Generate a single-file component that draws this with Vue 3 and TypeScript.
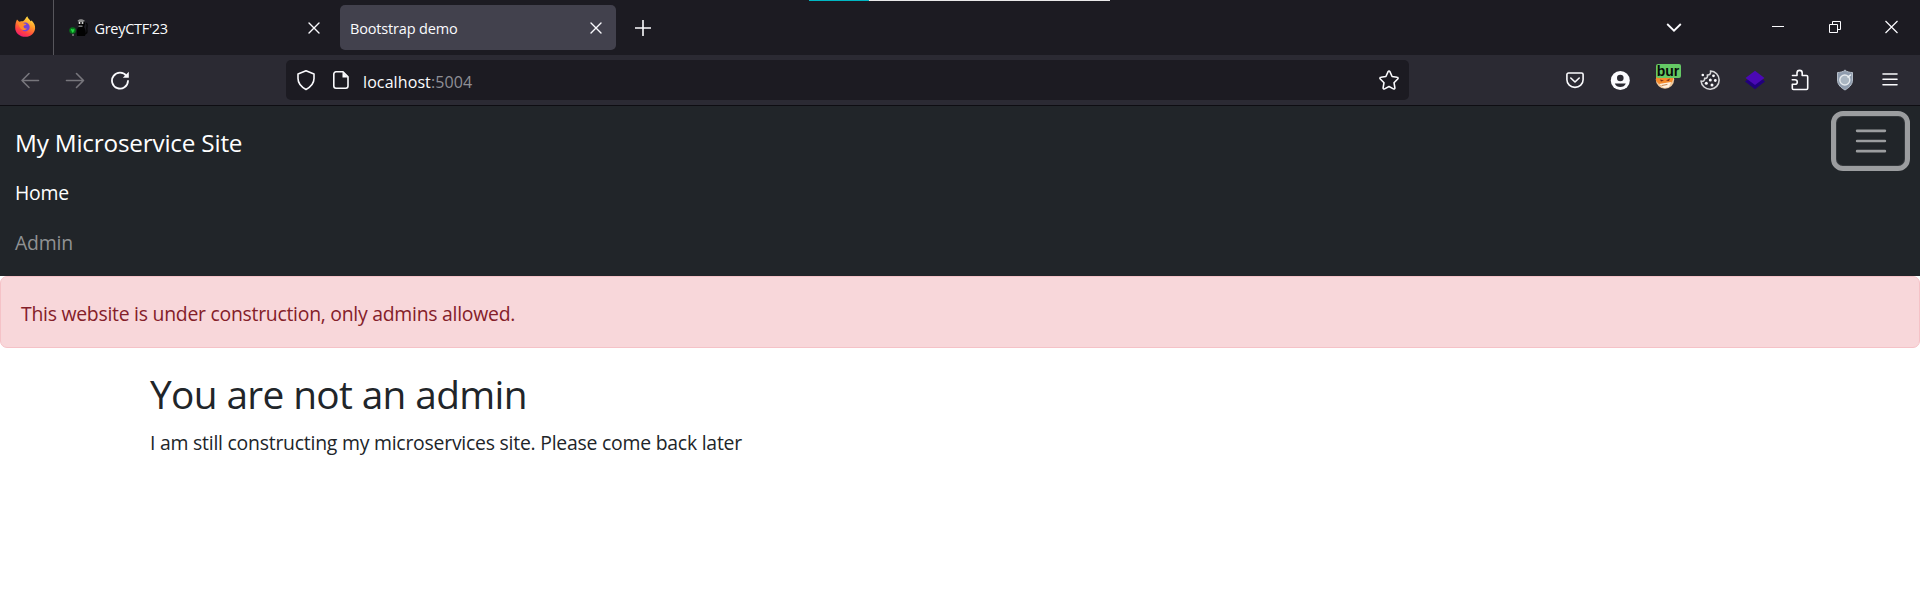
<script setup lang="ts">
interface NavLink {
  label: string
  active: boolean
}

const links: NavLink[] = [
  { label: 'Home', active: true },
  { label: 'Admin', active: false },
]
</script>

<template>
  <div class="window">
    <header class="tabs">
      <div class="load-strip"></div>
      <div class="view-button">
        <svg width="22" height="22" viewBox="0 0 22 22">
          <defs>
            <linearGradient id="flame" x1="0.8" y1="0" x2="0.3" y2="1">
              <stop offset="0" stop-color="#fff04a" />
              <stop offset="0.4" stop-color="#ff9a2a" />
              <stop offset="0.75" stop-color="#ff4340" />
              <stop offset="1" stop-color="#ee1a72" />
            </linearGradient>
          </defs>
          <path fill="url(#flame)" d="M3 3.500 5.200 5.800C6.500 5.200 8 5.400 9 5.300 11 4.400 11.500 2 13.300.3c.4 2 2.200 2.800 3.300 4.900l1.100-.7c2.500 2.600 3.600 5 3.400 8-.4 4.800-4.500 8.300-9.600 8.300C5.500 20.800 1.200 16.900 1.200 11.700c0-3.500.7-6 1.800-8.200z" />
          <circle cx="11.300" cy="11" r="4.400" fill="#7443d8" />
          <path fill="#ff8a2a" d="M3.500 7C5.500 5.600 8.500 6 10 7.600l2.500.5c-.4 1.300-2.500 1-3 2.200.2 1.500 1.600 2.700 3.500 2.200-1.500 2.200-4.800 2-6.200.2C5.600 11.500 5 9 3.500 7z" />
        </svg>
      </div>
      <div class="tab">
        <svg class="favicon" width="20" height="20" viewBox="0 0 20 20">
          <path d="M16 16c4-1 1-4 2-7 0-2 1-3-1-4" fill="none" stroke="#050505" stroke-width="1.200" />
          <path d="M9 7c0-3 1-5 3-5s4 1 4 4l-1 3c2 3 2 6 1 9H8c0-3-1-7 2-9z" fill="#020202" />
          <path d="M8.500 3c1-2.500 5.500-2.500 7.500 0L14 4h-4z" fill="#8d8d8d" />
          <circle cx="10.500" cy="5" r="1" fill="#fff" /><circle cx="13.500" cy="5" r="1" fill="#ddd" />
          <path d="M9.500 8.200h4" stroke="#777" />
          <circle cx="3.600" cy="12.500" r="3.300" fill="#08731c" />
          <path d="M2 11.500l2 1 1.200-1M3 14l1.500-1" stroke="#25d943" fill="none" />
          <path d="M4 16v2" stroke="#888" stroke-width="1.400" />
        </svg>
        <span class="tab-label grey-label">GreyCTF'23</span>
        <svg class="close" width="12" height="12" viewBox="0 0 12 12"><path d="M1 1l10 10M11 1L1 11" /></svg>
      </div>
      <div class="tab selected">
        <span class="tab-label demo-label">Bootstrap demo</span>
        <svg class="close" width="12" height="12" viewBox="0 0 12 12"><path d="M1 1l10 10M11 1L1 11" /></svg>
      </div>
      <svg class="plus" width="16" height="16" viewBox="0 0 16 16"><path d="M8 .5v15M.5 8h15" /></svg>
      <div class="caption">
        <svg class="chevron" width="16" height="10" viewBox="0 0 16 10"><path d="M1.200 1 8 7.700l6.800-6.700" /></svg>
        <svg width="57" height="20" viewBox="0 0 57 20"><path d="M23 8.500h12" /></svg>
        <svg width="57" height="20" viewBox="0 0 57 20"><path d="M23.500 6.500h8v8h-8zM26.500 6.500v-3h8v8h-3" /></svg>
        <svg width="57" height="20" viewBox="0 0 57 20"><path stroke-width="1.200" d="M22.500 3l12 12M34.500 3l-12 12" /></svg>
      </div>
    </header>

    <div class="toolbar">
      <div class="buttons">
        <span class="slot"><svg class="dim" width="20" height="20" viewBox="0 0 20 20"><path d="M18.500 10.500H2M9 3.500l-7 7 7 7" /></svg></span>
        <span class="slot"><svg class="dim" width="20" height="20" viewBox="0 0 20 20"><path d="M1.500 10.500h17M11.500 3.500l7 7-7 7" /></svg></span>
        <span class="slot"><svg width="20" height="20" viewBox="0 0 20 20"><path stroke-width="1.800" d="M16.500 6A8 8 0 1 0 18 11" /><path class="solid" d="M18.800 1.800v6h-6z" /></svg></span>
      </div>
      <div class="address">
        <svg class="shield" width="20" height="22" viewBox="0 0 20 22"><path d="M10 1.800 18 5v4.500c0 5-3.500 8.500-8 11-4.500-2.500-8-6-8-11V5z" /></svg>
        <svg class="page-icon" width="18" height="20" viewBox="0 0 18 20"><path d="M4 1.800h7l5 5V16a2.200 2.200 0 0 1-2.200 2.200H4A2.200 2.200 0 0 1 1.800 16V4A2.200 2.200 0 0 1 4 1.800z" /><path class="solid" d="M10.500 2v5.500H16z" /></svg>
        <span class="url"><b>localhost</b>:5004</span>
        <svg class="star" width="22" height="22" viewBox="0 0 22 22"><path d="M11 2c.5 0 .7.300.9.700l2.200 4.800 5 .7c1 .1 1.300 1.100.6 1.800L16 13.700l.9 5.100c.1 1-.7 1.500-1.500 1.100L11 17.500l-4.400 2.400c-.8.400-1.600-.1-1.500-1.100l.9-5.100L2.300 10c-.7-.7-.4-1.700.6-1.800l5-.7 2.200-4.800c.2-.4.4-.7.900-.7z" /></svg>
      </div>
      <div class="buttons extensions">
        <span class="slot"><svg width="20" height="20" viewBox="0 0 20 20"><path d="M3.500 3h13a1.600 1.600 0 0 1 1.600 1.600v5.200a8.100 7.600 0 0 1-16.200 0V4.600A1.600 1.600 0 0 1 3.500 3zM5.800 8l4.200 4 4.200-4" /></svg></span>
        <span class="slot"><svg width="20" height="20" viewBox="0 0 20 20"><circle class="solid" cx="10.300" cy="10.500" r="9.500" /><circle class="hole" cx="10.300" cy="8" r="3.300" /><path class="hole" d="M4.800 13.500h11c-1.500 4.700-9.500 4.700-11 0z" /></svg></span>
        <span class="slot badge-slot">
          <svg width="20" height="20" viewBox="0 0 20 20">
            <circle cx="10" cy="9.500" r="9.200" fill="#efc99e" stroke="none" />
            <path fill="#f58a2c" stroke="none" d="M1 7h18l-2 5-4 2-3-1-4 3-5-5z" />
            <path fill="#7c2c14" stroke="none" d="M5 9.500l4 1-3 .9zM15 8.500l-4 2 3 .5z" />
            <path fill="#fff0df" stroke="none" d="M4 14l6-1 6-1-2 5-5 1z" />
            <path d="M7 15.500l5-1" stroke="#c9854a" stroke-width="1" />
          </svg>
          <span class="badge">bur</span>
        </span>
        <span class="slot">
          <svg class="cookie" width="22" height="22" viewBox="0 0 22 22">
            <path d="M11.500 2A9.100 9.100 0 1 1 2 12c2 .8 4-.4 3.600-2.600C8 9.600 9 8 8.300 6c2.500.3 3.900-1.800 3.200-4z" />
            <g class="solid"><circle cx="3.800" cy="6" r="1.300" /><circle cx="14.500" cy="6.800" r="1.400" /><circle cx="11.300" cy="11" r="1.500" /><circle cx="16.300" cy="11.500" r="1.400" /><circle cx="7.300" cy="14.300" r="1.500" /><circle cx="13" cy="16" r="1.500" /></g>
          </svg>
        </span>
        <span class="slot"><svg width="20" height="20" viewBox="0 0 20 20"><path fill="#21007c" stroke="none" d="M0 11.500 3 9h14l3 2.500-10 7.800z" /><path fill="#4b08b5" stroke="none" d="M10 .8 19.500 8 10 15 .5 8z" /></svg></span>
        <span class="slot"><svg width="20" height="22" viewBox="0 0 20 22"><path d="M2.500 6.500H7V4a2.600 2.600 0 0 1 5.200 0v2.500h4.300a1.200 1.200 0 0 1 1.200 1.200v11.600a1.200 1.200 0 0 1-1.200 1.200h-13a1.200 1.200 0 0 1-1.200-1.200v-4H5a2.300 2.300 0 0 0 0-4.600H2.300" /></svg></span>
        <span class="slot"><svg width="18" height="22" viewBox="0 0 18 22"><path fill="#8f9cae" stroke="#b5bec9" stroke-width="1" d="M9 1.500c2.500 1.500 5 2 7.500 2V11c0 5-4 8-7.500 10-3.500-2-7.500-5-7.500-10V3.500C4 3.500 6.500 3 9 1.500z" /><circle cx="8.800" cy="11" r="5" fill="#aab6c2" stroke="#e4e9ed" stroke-width="1.400" /><path d="M12 8l2.500-2" stroke="#edf2f5" /></svg></span>
        <span class="slot"><svg width="16" height="14" viewBox="0 0 16 14"><path d="M1 1h14M1 6.300h14M1 11.700h14" /></svg></span>
      </div>
    </div>

    <nav class="navbar">
      <div class="menu">
        <a class="brand">My Microservice Site</a>
        <a v-for="link in links" :key="link.label" class="link" :class="{ active: link.active }">{{ link.label }}</a>
      </div>
      <button class="toggler" aria-label="Toggle navigation">
        <svg width="38" height="38" viewBox="0 0 30 30"><path d="M4 7h22M4 15h22M4 23h22" /></svg>
      </button>
    </nav>

    <div class="alert"><span>This website is under construction, only admins allowed.</span></div>
    <main class="content">
      <h2>You are not an admin</h2>
      <p>I am still constructing my microservices site. Please come back later</p>
    </main>
  </div>
</template>

<style>
body {
  margin: 0;
  background: #fff;
}
</style>

<style scoped>
.window {
  width: 1920px;
  height: 609px;
  overflow: hidden;
  font-family: "Open Sans", "Noto Sans", sans-serif;
  color: #212529;
}
svg {
  display: block;
  flex: none;
  fill: none;
  stroke: #fbfbfe;
  stroke-width: 1.6;
  stroke-linecap: round;
  stroke-linejoin: round;
}
.solid { fill: #fbfbfe; stroke: none; }
.hole { fill: #2b2a33; stroke: none; }

.tabs {
  position: relative;
  display: flex;
  align-items: center;
  height: 55px;
  background: #1c1b22;
  box-sizing: border-box;
}
.load-strip {
  position: absolute;
  top: 0;
  left: 809px;
  width: 301px;
  height: 1px;
  background: linear-gradient(90deg, #00b7c3 60px, #e9e9e9 60px);
}
.view-button {
  display: flex;
  align-items: center;
  width: 54px;
  height: 55px;
  padding-left: 14px;
  border-right: 1px solid #57565c;
  box-sizing: border-box;
}
.view-button svg {
  margin-bottom: 1px;
  stroke: none;
}
.tab {
  display: flex;
  align-items: center;
  width: 286px;
  height: 45px;
  padding: 0 20px 0 15px;
  box-sizing: border-box;
}
.favicon { margin-right: 5.5px; }
.favicon * { stroke-linecap: butt; }
.favicon circle { stroke: none; }
.favicon path[fill]:not([stroke]) { stroke: none; }
.tab-label {
  font-size: 14.5px;
  line-height: 20px;
  color: #fbfbfe;
  white-space: nowrap;
  margin-top: 3px;
}
.grey-label { letter-spacing: -0.3px; }
.demo-label { letter-spacing: -0.17px; }
.close {
  margin-left: auto;
  stroke-width: 1.4;
}
.selected {
  width: 276px;
  padding: 0 14px 0 10px;
  border-radius: 5px;
  background: #42414d;
}
.plus { margin-left: 19px; }
.caption {
  display: flex;
  align-items: center;
  margin-left: auto;
}
.caption svg {
  stroke-width: 1;
  stroke-linecap: butt;
  stroke-linejoin: miter;
}
.caption .chevron {
  margin-right: 67px;
  stroke-width: 1.8;
}

.toolbar {
  display: flex;
  align-items: center;
  height: 51px;
  padding-left: 7px;
  background: #2b2a33;
  border-bottom: 1px solid #0e0d12;
  box-sizing: border-box;
}
.buttons { display: flex; }
.slot {
  display: flex;
  align-items: center;
  justify-content: center;
  width: 45px;
  height: 40px;
}
.dim { stroke: #77767c; }
.address {
  display: flex;
  align-items: center;
  width: 1123px;
  height: 40px;
  margin-left: 144px;
  padding: 0 9px 0 10px;
  border-radius: 5px;
  background: #1c1b22;
  box-sizing: border-box;
}
.shield { margin-right: 16px; }
.url {
  margin: 4px 0 0 13px;
  font-size: 16px;
  line-height: 24px;
  letter-spacing: 0.1px;
  color: #8f8f96;
}
.url b {
  font-weight: 400;
  color: #fbfbfe;
}
.star { margin-left: auto; }
.extensions { margin-left: 143.5px; }
.badge-slot { position: relative; }
.badge {
  position: absolute;
  top: 4px;
  left: 13px;
  width: 25px;
  height: 14px;
  border-radius: 2px;
  background: #65c965;
  color: #080c08;
  font: bold 14px/14px "Liberation Sans", sans-serif;
  text-align: center;
}
.cookie { stroke: #d5d5d8; }

.navbar {
  display: flex;
  justify-content: space-between;
  align-items: flex-start;
  height: 170px;
  padding: 5px 10px 0 15px;
  background: #212529;
  box-sizing: border-box;
}
.menu {
  display: flex;
  flex-direction: column;
  padding-top: 6.5px;
}
.brand {
  font-size: 24.300px;
  line-height: 50px;
  letter-spacing: -0.2px;
  color: #fff;
  white-space: nowrap;
}
.link {
  font-size: 19.400px;
  line-height: 50px;
  letter-spacing: -0.2px;
  color: #909294;
}
.link.active { color: #fff; }
.toggler {
  display: flex;
  align-items: center;
  justify-content: center;
  width: 79px;
  height: 60px;
  padding: 0;
  border: 5px solid #9b9d9f;
  border-radius: 12px;
  background: #212529;
  box-shadow: inset 0 0 0 1px #34383c;
}
.toggler svg {
  stroke: #9b9d9f;
  stroke-width: 2;
}

.alert {
  height: 72px;
  padding: 21.500px 20px 0;
  border: 1px solid #f5c2c7;
  border-radius: 7px;
  background: #f8d7da;
  color: #842029;
  box-sizing: border-box;
  font-size: 19.400px;
  line-height: 30px;
  letter-spacing: -0.26px;
}
.content { padding: 22px 150px 0; }
h2 {
  margin: 0 0 9.500px;
  font-size: 38.800px;
  font-weight: 400;
  line-height: 48px;
  letter-spacing: -0.63px;
}
p {
  margin: 0;
  font-size: 19.400px;
  line-height: 30px;
  letter-spacing: -0.23px;
}
</style>
